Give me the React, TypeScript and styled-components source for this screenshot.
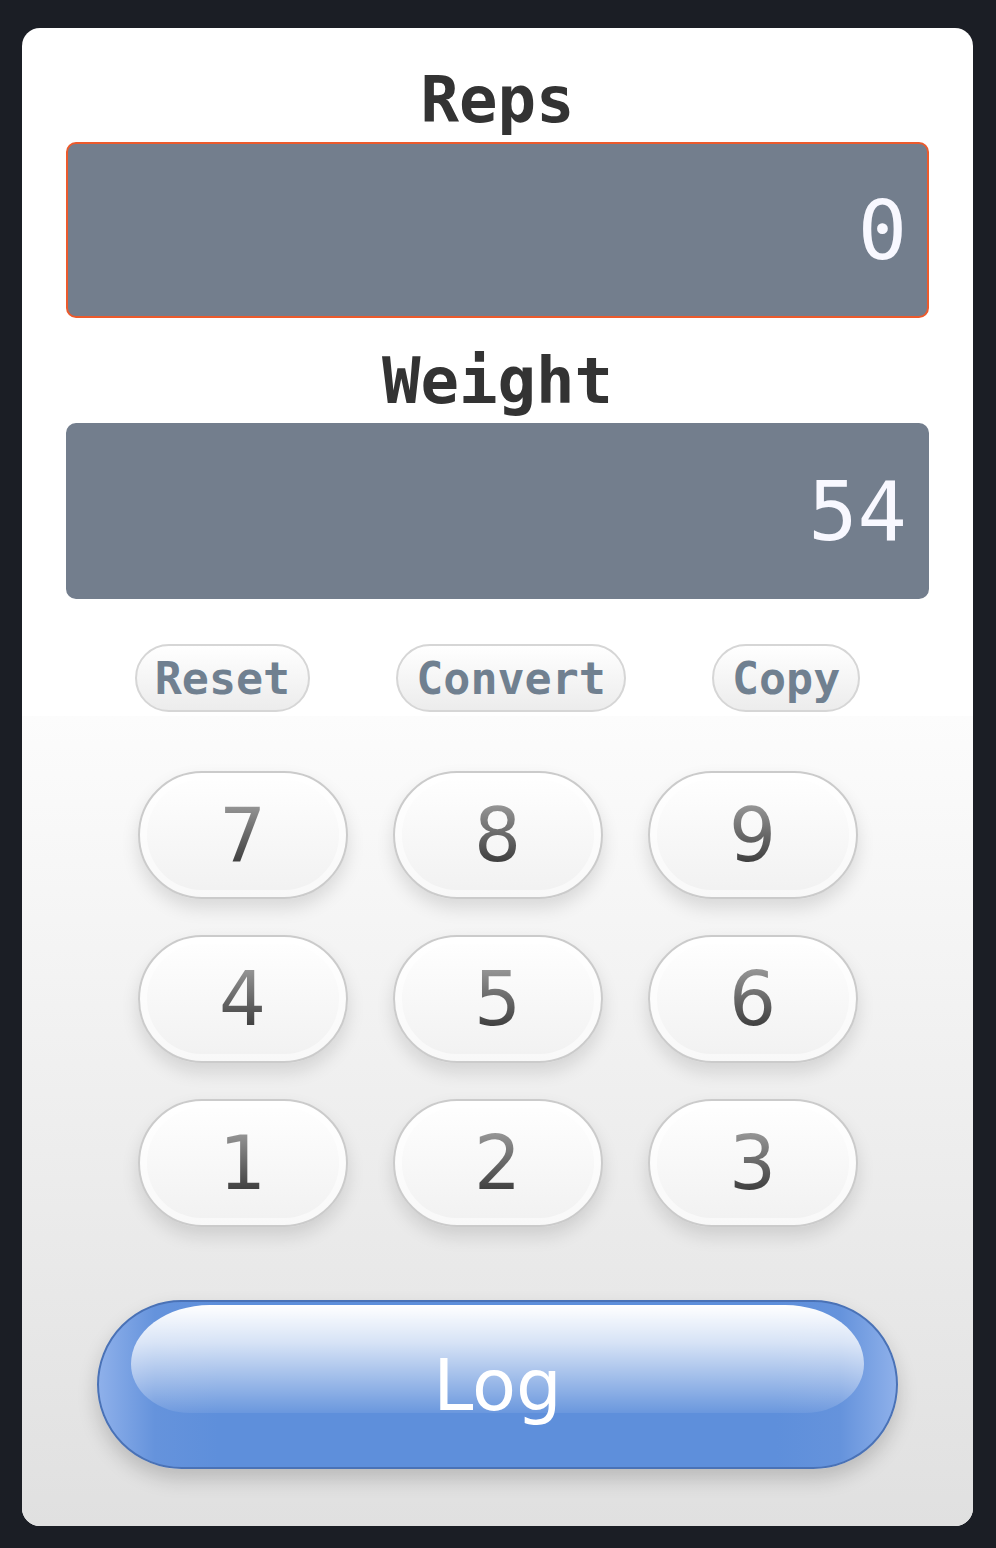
import React from "react";
import styled, { createGlobalStyle } from "styled-components";

const Global = createGlobalStyle`
  html, body { margin: 0; padding: 0; background: #1b1e25; }
  * { box-sizing: border-box; }
`;

const Page = styled.div`
  padding: 28px 23px 22px 22px;
  background: #1b1e25;
`;

const Card = styled.div`
  width: 951px;
  height: 1498px;
  border-radius: 18px;
  overflow: hidden;
  background: #ffffff;
  display: flex;
  flex-direction: column;
`;

const Top = styled.div`
  padding: 30px 44px 0;
  display: flex;
  flex-direction: column;
`;

const Label = styled.div<{ $gap?: number }>`
  margin-top: ${(p) => p.$gap ?? 0}px;
  height: 84px;
  line-height: 84px;
  text-align: center;
  font-family: "DejaVu Sans Mono", monospace;
  font-weight: bold;
  font-size: 64px;
  color: #333333;
`;

const Display = styled.div<{ $active?: boolean }>`
  height: 176px;
  border-radius: 10px;
  background: #737e8d;
  border: 2px solid ${(p) => (p.$active ? "#ec5a2c" : "#737e8d")};
  display: flex;
  align-items: center;
  justify-content: flex-end;
  padding-right: 20px;
  font-family: "DejaVu Sans Mono", monospace;
  font-variant-numeric: slashed-zero;
  font-feature-settings: "zero" 1;
  font-size: 82px;
  color: #f8f8ff;
`;

const Actions = styled.div`
  margin-top: 45px;
  margin-bottom: 4px;
  display: flex;
  justify-content: center;
  gap: 86px;
`;

const ActionButton = styled.button`
  height: 68px;
  padding: 0 18px;
  border-radius: 34px;
  border: 2px solid #d6d6d6;
  background: linear-gradient(#ffffff, #ececec);
  font-family: "DejaVu Sans Mono", monospace;
  font-weight: bold;
  font-size: 45px;
  color: #708090;
  line-height: 1;
  cursor: pointer;
`;

const Lower = styled.div`
  flex: 1;
  background: linear-gradient(#fcfcfc, #e0e0e0);
  padding: 55px 0 58px;
  display: flex;
  flex-direction: column;
  align-items: center;
`;

const Keypad = styled.div`
  display: grid;
  grid-template-columns: repeat(3, 210px);
  grid-auto-rows: 128px;
  column-gap: 45px;
  row-gap: 36px;
`;

const Key = styled.button`
  border-radius: 64px;
  border: 2px solid #cbcbcb;
  background: linear-gradient(#ffffff, #f1f1f1);
  box-shadow: 0 9px 18px rgba(0, 0, 0, 0.12),
    inset 0 0 0 7px rgba(255, 255, 255, 0.5);
  display: flex;
  align-items: center;
  justify-content: center;
  padding: 0;
  cursor: pointer;
`;

const Digit = styled.span`
  font-family: "DejaVu Sans", sans-serif;
  font-size: 74px;
  line-height: 1;
  background: linear-gradient(#a0a0a0, #303030);
  -webkit-background-clip: text;
  background-clip: text;
  color: transparent;
`;

const LogButton = styled.button`
  position: relative;
  margin-top: 73px;
  width: 801px;
  height: 169px;
  border-radius: 85px;
  border: 2px solid #4a72b6;
  background: linear-gradient(
    to right,
    #8eb0ea 0%,
    #6593dc 7%,
    #5e8fdb 15%,
    #5e8fdb 85%,
    #6593dc 93%,
    #8eb0ea 100%
  );
  box-shadow: 0 10px 20px rgba(0, 0, 0, 0.18);
  display: flex;
  align-items: center;
  justify-content: center;
  padding: 0;
  overflow: hidden;
  cursor: pointer;

  &::before {
    content: "";
    position: absolute;
    top: 3px;
    left: 32px;
    right: 32px;
    height: 108px;
    border-radius: 80px 80px 60px 60px / 60px 60px 50px 50px;
    background: linear-gradient(
      rgba(255, 255, 255, 1),
      rgba(255, 255, 255, 0.75) 35%,
      rgba(255, 255, 255, 0.08) 100%
    );
  }
`;

const LogText = styled.span`
  position: relative;
  font-family: "DejaVu Sans", sans-serif;
  font-size: 72px;
  line-height: 1;
  color: #ffffff;
`;

export default function App() {
  const keys = ["7", "8", "9", "4", "5", "6", "1", "2", "3"];
  return (
    <Page>
      <Global />
      <Card>
        <Top>
          <Label>Reps</Label>
          <Display $active>0</Display>
          <Label $gap={21}>Weight</Label>
          <Display>54</Display>
          <Actions>
            <ActionButton>Reset</ActionButton>
            <ActionButton>Convert</ActionButton>
            <ActionButton>Copy</ActionButton>
          </Actions>
        </Top>
        <Lower>
          <Keypad>
            {keys.map((k) => (
              <Key key={k}>
                <Digit>{k}</Digit>
              </Key>
            ))}
          </Keypad>
          <LogButton>
            <LogText>Log</LogText>
          </LogButton>
        </Lower>
      </Card>
    </Page>
  );
}
